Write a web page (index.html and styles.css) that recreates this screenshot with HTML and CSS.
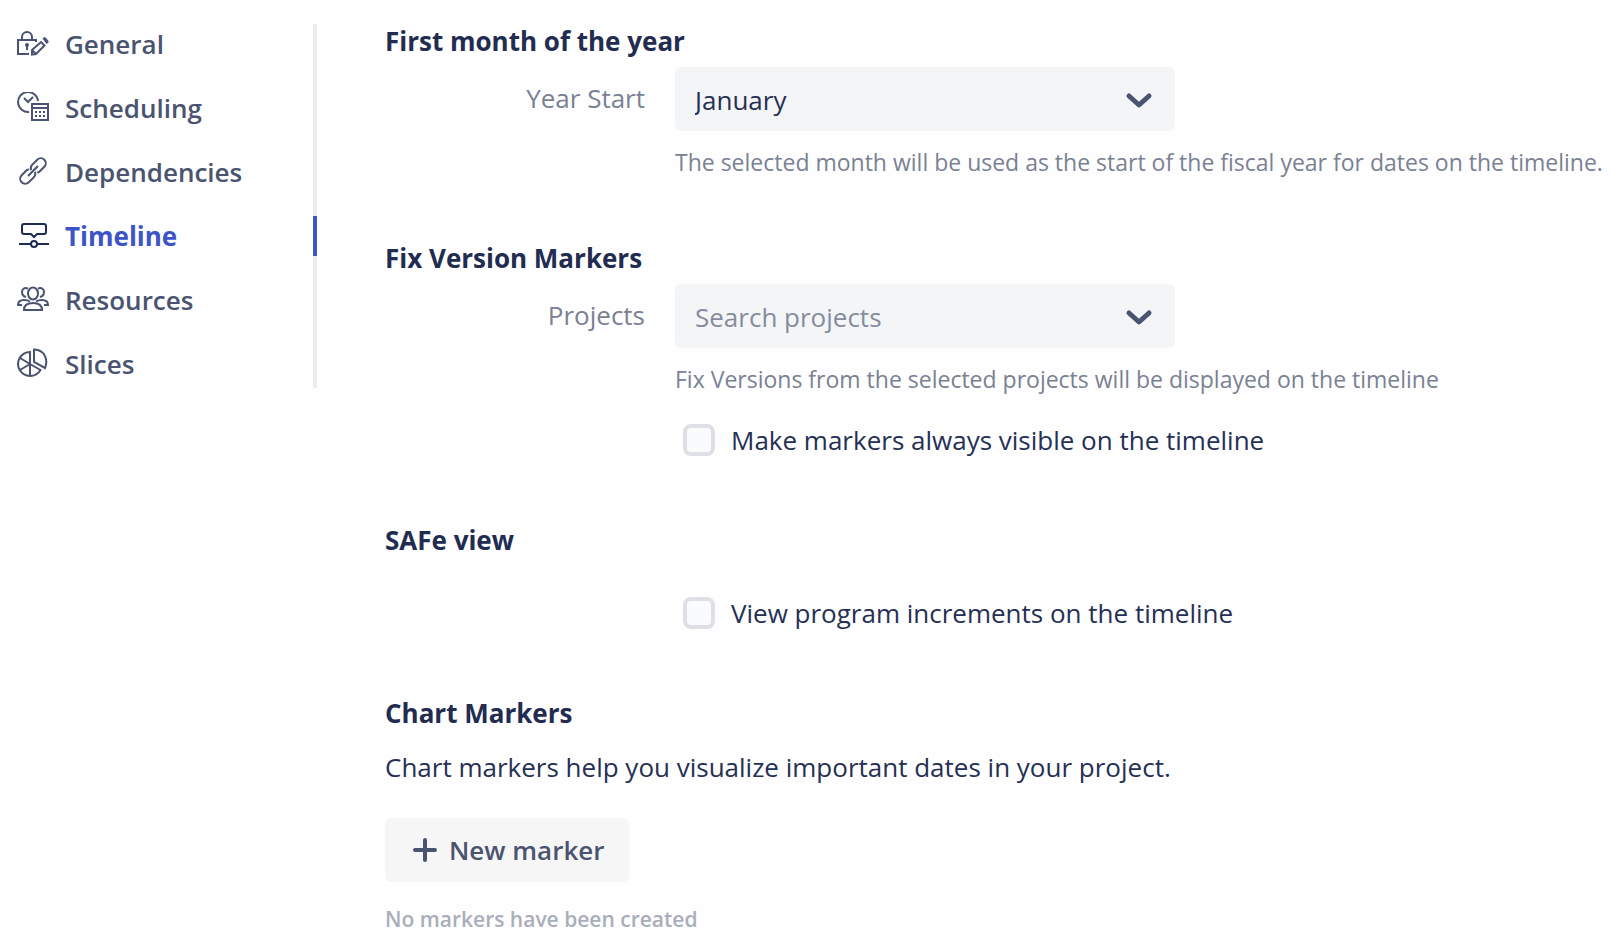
FILE: index.html
```
<!DOCTYPE html>
<html lang="en">
<head>
  <meta charset="UTF-8">
  <title>Timeline settings</title>
  <link rel="stylesheet" href="styles.css">
</head>
<body>

<nav class="sidebar">
  <a href="#general" class="nav-item">
    <svg class="icon" viewBox="0 0 32 32">
      <path d="M19 14V12H1v14h11M5 12V9a5 5 0 0 1 10 0v3"/>
      <circle cx="10" cy="17" r="2" class="fill"/>
      <path d="M10 17v5M15 22l9-8 3.500 3.500L19 26l-4 .5zM15 22l4 4"/>
      <path d="M25.500 10.500l2-1.500q1 0 4 4v1.500l-2 1.500z" class="fill"/>
    </svg>
    General
  </a>
  <a href="#scheduling" class="nav-item">
    <svg class="icon" viewBox="0 0 32 32">
      <path d="M21 9A10 10 0 1 0 12 20M7 6l4 4 5-5"/>
      <path d="M15 12h16v16H15zM15 16h16"/>
      <path d="M18 20h2M22 20h2M26 20h2M18 24h2M22 24h2M26 24h2"/>
    </svg>
    Scheduling
  </a>
  <a href="#dependencies" class="nav-item">
    <svg class="icon" viewBox="0 0 32 32">
      <g transform="translate(16 15) rotate(-45)">
        <path d="M-7 0H7M-1-2Q1-5 4-5h7a5 5 0 0 1 0 10H4Q3 5 2 4"/>
        <path d="M1 2Q-1 5-4 5h-7a5 5 0 0 1 0-10h7q1 0 2 1"/>
      </g>
    </svg>
    Dependencies
  </a>
  <a href="#timeline" class="nav-item active">
    <svg class="icon" viewBox="0 0 32 32">
      <path d="M7 4h20a2 2 0 0 1 2 2v6a2 2 0 0 1-2 2h-7l-3 3-3-3H7a2 2 0 0 1-2-2V6a2 2 0 0 1 2-2zM2 24h12M20 24h12"/>
      <circle cx="17" cy="24" r="3"/>
    </svg>
    Timeline
  </a>
  <a href="#resources" class="nav-item">
    <svg class="icon" viewBox="0 0 32 32">
      <ellipse cx="16" cy="9.5" rx="5" ry="6"/>
      <path d="M7 26q0-7 9-7t9 7z"/>
      <path d="M11 4.500C7 3 5 5.500 5 8q0 4 4 5M21 4.500C25 3 27 5.500 27 8q0 4-4 5"/>
      <path d="M5 21H1q0-5 6-5 4 0 6 1.500M27 21h4q0-5-6-5-4 0-6 1.500"/>
    </svg>
    Resources
  </a>
  <a href="#slices" class="nav-item">
    <svg class="icon" viewBox="0 0 32 32">
      <path d="M13 4A12 12 0 1 0 23.500 22L13 16zM13 16v12M13 16L3 10M13 16L3 22"/>
      <path d="M17 1.500V14l11 6C31 13 29 2 17 1.500z"/>
    </svg>
    Slices
  </a>
</nav>

<main class="content">
  <section>
    <h2>First month of the year</h2>
    <div class="field">
      <label for="yearStart">Year Start</label>
      <div class="control">
        <div class="select-wrap">
          <select id="yearStart">
            <option>January</option>
            <option>February</option>
            <option>March</option>
            <option>April</option>
            <option>May</option>
            <option>June</option>
            <option>July</option>
            <option>August</option>
            <option>September</option>
            <option>October</option>
            <option>November</option>
            <option>December</option>
          </select>
          <svg class="chevron" viewBox="0 0 24 14"><path d="M2 2l10 9L22 2"/></svg>
        </div>
        <p class="help">The selected month will be used as the start of the fiscal year for dates on the timeline.</p>
      </div>
    </div>
  </section>

  <section>
    <h2>Fix Version Markers</h2>
    <div class="field">
      <label for="projects">Projects</label>
      <div class="control">
        <div class="select-wrap">
          <select id="projects" class="placeholder">
            <option value="">Search projects</option>
          </select>
          <svg class="chevron" viewBox="0 0 24 14"><path d="M2 2l10 9L22 2"/></svg>
        </div>
        <p class="help">Fix Versions from the selected projects will be displayed on the timeline</p>
      </div>
    </div>
    <div class="check">
      <input type="checkbox" id="markersVisible">
      <label for="markersVisible">Make markers always visible on the timeline</label>
    </div>
  </section>

  <section>
    <h2>SAFe view</h2>
    <div class="check safe-check">
      <input type="checkbox" id="programIncrements">
      <label for="programIncrements">View program increments on the timeline</label>
    </div>
  </section>

  <section>
    <h2>Chart Markers</h2>
    <p class="intro">Chart markers help you visualize important dates in your project.</p>
    <button type="button" class="new-marker">
      <svg class="plus" viewBox="0 0 24 24"><path d="M12 2v20M2 12h20"/></svg>
      New marker
    </button>
    <p class="empty">No markers have been created</p>
  </section>
</main>

</body>
</html>
```
FILE: styles.css
```
* {
  box-sizing: border-box;
}
body {
  margin: 0;
  padding-top: 24px;
  display: flex;
  align-items: flex-start;
  font-family: 'Segoe UI', 'Open Sans', sans-serif;
  font-size: 26px;
  line-height: 36px;
  color: #253054;
  background: #fefefe;
}
h2, p {
  margin: 0;
}
.sidebar {
  flex: 0 0 317px;
  display: flex;
  flex-direction: column;
  gap: 24px;
  padding: 0 0 4px 17px;
  box-shadow: inset -4px 0 #ebebf0;
}
.nav-item {
  height: 40px;
  display: flex;
  align-items: center;
  gap: 16px;
  border-right: 4px solid transparent;
  color: #4a5470;
  font-weight: 600;
  text-decoration: none;
}
.nav-item.active {
  color: #3d54c8;
  border-right-color: #3d54c8;
  font-weight: 700;
}
.icon {
  width: 32px;
  height: 32px;
  fill: none;
  stroke: #4a5470;
  stroke-width: 2;
}
.icon .fill {
  fill: #4a5470;
  stroke: none;
}
.active .icon {
  stroke: #1f2b50;
}
.content {
  flex: 1;
  min-width: 0;
  padding-left: 68px;
}
section {
  margin-bottom: 63px;
}
section:last-child {
  margin-bottom: 0;
}
h2 {
  font-size: 26px;
  font-weight: 700;
  line-height: 34px;
  color: #212c50;
}
.field {
  display: grid;
  grid-template-columns: 260px 1fr;
  column-gap: 30px;
  margin-top: 9px;
}
.field label {
  line-height: 62px;
  text-align: right;
  color: #7a8194;
}
.select-wrap {
  position: relative;
  width: 500px;
}
select {
  appearance: none;
  display: block;
  width: 100%;
  height: 64px;
  padding: 2px 20px 0;
  border: 0;
  border-radius: 6px;
  background: #f4f5f7;
  color: #253054;
  font: inherit;
}
select.placeholder {
  color: #858c9e;
}
.chevron {
  position: absolute;
  top: 27px;
  right: 24px;
  width: 24px;
  height: 14px;
  fill: none;
  stroke: #4a5470;
  stroke-width: 5;
  stroke-linecap: round;
  stroke-linejoin: round;
  overflow: visible;
  pointer-events: none;
}
.help {
  margin-top: 16px;
  font-size: 23px;
  line-height: 31px;
  white-space: nowrap;
  color: #7a8194;
}
.check {
  height: 40px;
  display: flex;
  align-items: center;
  gap: 16px;
  margin: 25px 0 0 298px;
}
.check input {
  appearance: none;
  width: 32px;
  height: 32px;
  margin: 0;
  border: 4px solid #dfe0e6;
  border-radius: 8px;
  background: #fafbfd;
}
.check input:checked {
  background: #3d54c8;
}
.safe-check {
  margin-top: 36px;
}
.intro {
  margin-top: 19px;
}
.new-marker {
  display: flex;
  align-items: center;
  gap: 12px;
  height: 64px;
  margin-top: 33px;
  padding: 0 24px 0 28px;
  border: 0;
  border-radius: 6px;
  background: #f6f6f6;
  color: #4a5470;
  font: inherit;
  font-weight: 600;
}
.plus {
  width: 24px;
  height: 24px;
  fill: none;
  stroke: #4a5470;
  stroke-width: 4;
  stroke-linecap: round;
}
.empty {
  margin-top: 21px;
  font-size: 21px;
  line-height: 32px;
  font-weight: 600;
  color: #a9aebb;
}
```
